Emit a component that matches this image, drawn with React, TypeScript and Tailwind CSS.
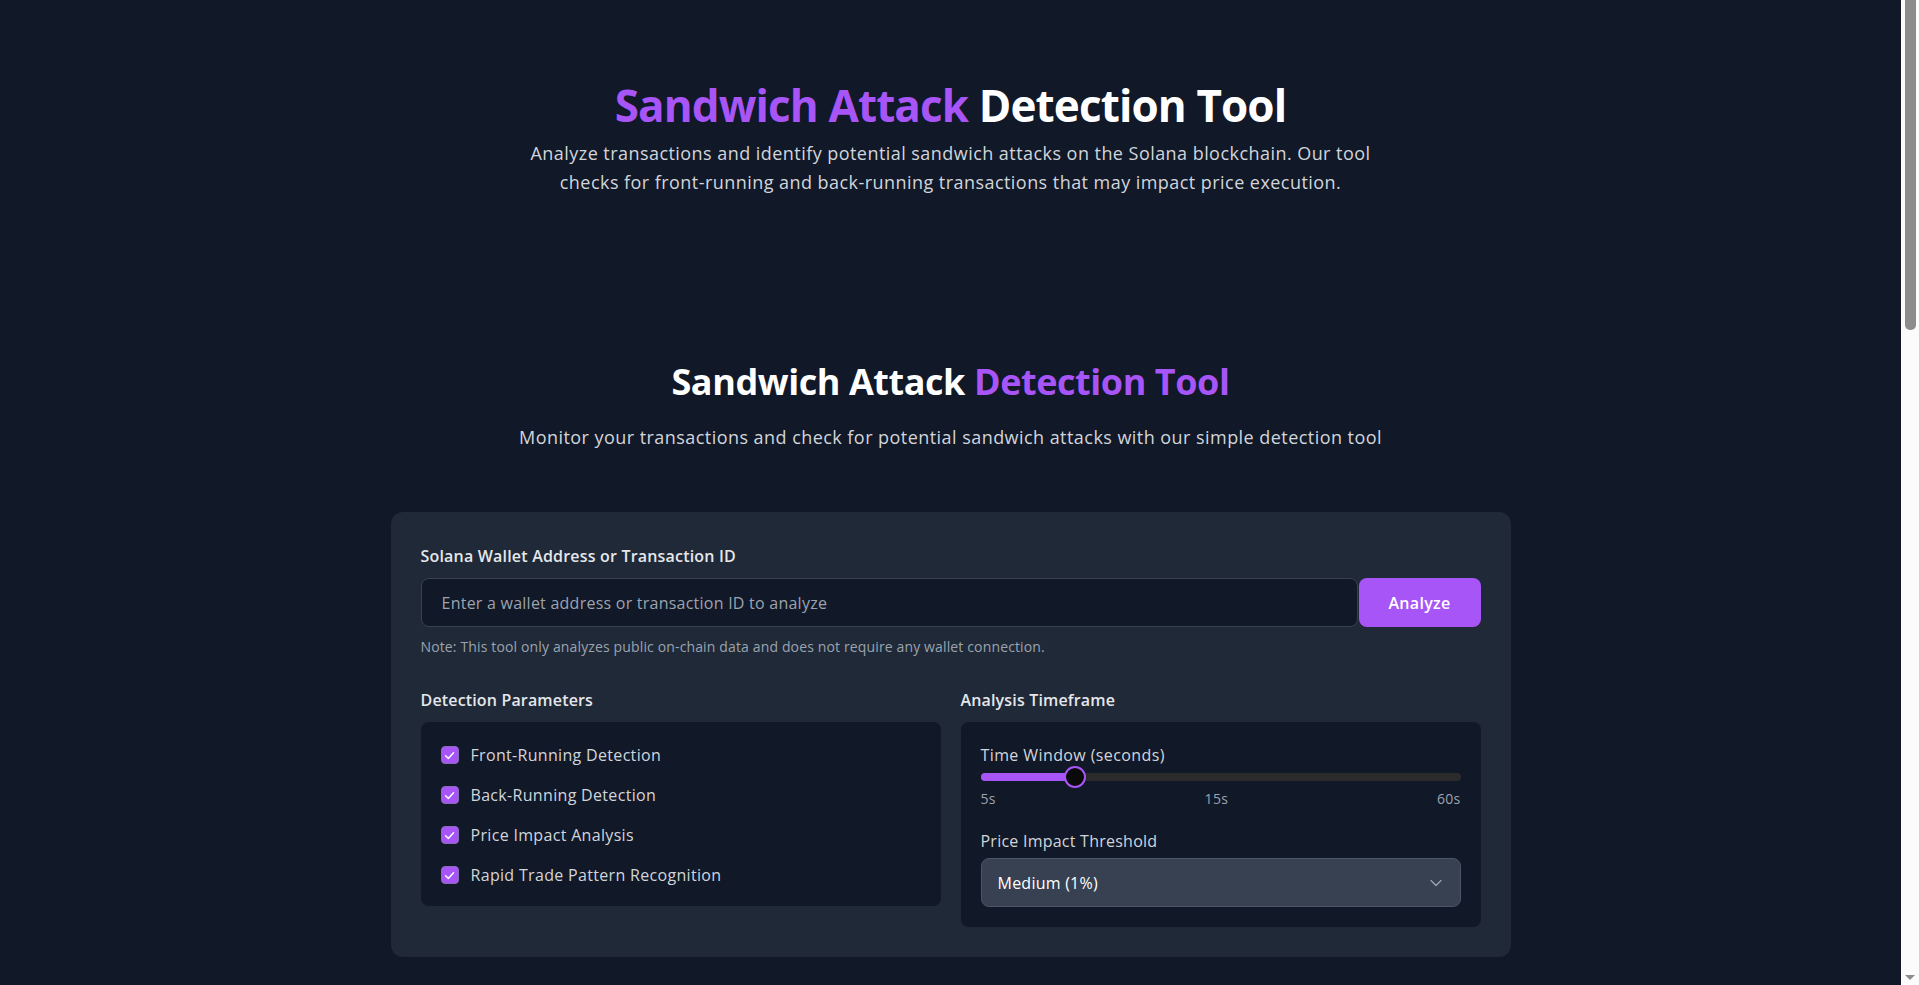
import React from "react";
import { ChevronDown } from "lucide-react";

const params = [
  "Front-Running Detection",
  "Back-Running Detection",
  "Price Impact Analysis",
  "Rapid Trade Pattern Recognition",
];

function Check() {
  return (
    <span className="flex h-[18px] w-[18px] shrink-0 items-center justify-center rounded-[4px] border border-[#8a6bb8] bg-[#a855f7]">
      <svg width="13" height="13" viewBox="0 0 12 12" fill="none">
        <path d="M2.4 6.2L5 8.7L9.7 3.5" stroke="white" strokeWidth="1.4" strokeLinecap="round" strokeLinejoin="round" />
      </svg>
    </span>
  );
}

export default function App() {
  return (
    <div className="flex h-screen overflow-hidden bg-[#111827] font-['Open_Sans','Noto_Sans',sans-serif] text-[#e5e7eb]">
      <main className="min-w-0 flex-1">
        <section className="pt-[81px] text-center">
          <h1 className="text-[44px] font-bold leading-[48px] tracking-[-0.02em]">
            <span className="text-[#a855f7]">Sandwich Attack</span>{" "}
            <span className="text-white">Detection Tool</span>
          </h1>
          <p className="mx-auto mt-[10px] text-lg leading-[29px] tracking-[0.025em] text-[#d1d5db]">
            Analyze transactions and identify potential sandwich attacks on the Solana blockchain. Our tool
            <br />
            checks for front-running and back-running transactions that may impact price execution.
          </p>
        </section>

        <section className="mt-[165px] text-center">
          <h2 className="text-4xl font-bold leading-10 tracking-[-0.012em] text-white">
            Sandwich Attack <span className="text-[#a855f7]">Detection Tool</span>
          </h2>
          <p className="mt-[21px] text-lg leading-7 tracking-[0.025em] text-[#d1d5db]">
            Monitor your transactions and check for potential sandwich attacks with our simple detection tool
          </p>
        </section>

        <div className="mx-auto mt-[61px] w-[1120px] rounded-xl bg-[#1f2937] p-[30px]">
          <label className="mb-[10px] mt-[2px] block text-base font-semibold leading-6 tracking-[0.012em] text-[#e5e7eb]">
            Solana Wallet Address or Transaction ID
          </label>
          <div className="flex">
            <input
              className="h-[49px] flex-1 rounded-lg border border-[#374151] bg-[#111827] px-5 text-base tracking-[0.015em] text-white outline-none placeholder:text-[#9ca3af]"
              placeholder="Enter a wallet address or transaction ID to analyze"
            />
            <button className="ml-px h-[49px] w-[122px] rounded-lg bg-[#a855f7] text-base font-semibold tracking-[0.02em] text-white">
              Analyze
            </button>
          </div>
          <p className="mt-2.5 text-sm leading-5 tracking-[0.01em] text-[#9ca3af]">
            Note: This tool only analyzes public on-chain data and does not require any wallet connection.
          </p>

          <div className="mt-[31px] grid grid-cols-2 items-start gap-5">
            <div>
              <h3 className="mb-2.5 text-base font-semibold leading-6 tracking-[0.01em] text-[#e5e7eb]">
                Detection Parameters
              </h3>
              <div className="flex flex-col gap-4 rounded-lg bg-[#111827] px-5 pb-[19px] pt-[21px]">
                {params.map((p) => (
                  <div key={p} className="flex h-6 items-center gap-3">
                    <Check />
                    <span className="text-base leading-6 tracking-[0.02em] text-[#d1d5db]">{p}</span>
                  </div>
                ))}
              </div>
            </div>

            <div>
              <h3 className="mb-2.5 text-base font-semibold leading-6 tracking-[0.01em] text-[#e5e7eb]">
                Analysis Timeframe
              </h3>
              <div className="rounded-lg bg-[#111827] px-5 pb-5 pt-[21px]">
                <div className="text-base leading-6 tracking-[0.025em] text-[#d1d5db]">Time Window (seconds)</div>
                <div className="relative -mt-px h-[22px]">
                  <div className="absolute left-0 right-0 top-[7px] h-2 rounded-full bg-[#2b2b2b]" />
                  <div className="absolute left-0 top-[7px] h-2 w-[94px] rounded-full bg-[#a855f7]" />
                  <div className="absolute left-[83px] top-0 h-[22px] w-[22px] rounded-full border-2 border-[#a855f7] bg-[#0a0a0c]" />
                </div>
                <div className="mt-px flex justify-between text-sm leading-5 tracking-[0.02em] text-[#9ca3af]">
                  <span>5s</span>
                  <span>15s</span>
                  <span>60s</span>
                </div>
                <div className="mt-5 text-base leading-6 tracking-[0.015em] text-[#d1d5db]">Price Impact Threshold</div>
                <div className="mt-[5px] flex h-[49px] items-center justify-between rounded-lg border border-[#4b5563] bg-[#374151] pl-4 pr-[14px]">
                  <span className="text-base tracking-[0.015em] text-white">Medium (1%)</span>
                  <ChevronDown size={20} strokeWidth={1.5} className="text-[#9ca3af]" />
                </div>
              </div>
            </div>
          </div>
        </div>
      </main>

      <aside className="relative flex w-[18px] shrink-0 flex-col bg-[#fbfbfb]">
        <div className="ml-1 h-[330px] w-[11px] rounded-b-[5px] bg-[#8c8c8c]" />
        <div className="flex-1" />
        <svg width="18" height="12" viewBox="0 0 18 12" className="mb-[2px]">
          <path d="M4 4H14L9 9Z" fill="#8c8c8c" />
        </svg>
      </aside>
    </div>
  );
}
